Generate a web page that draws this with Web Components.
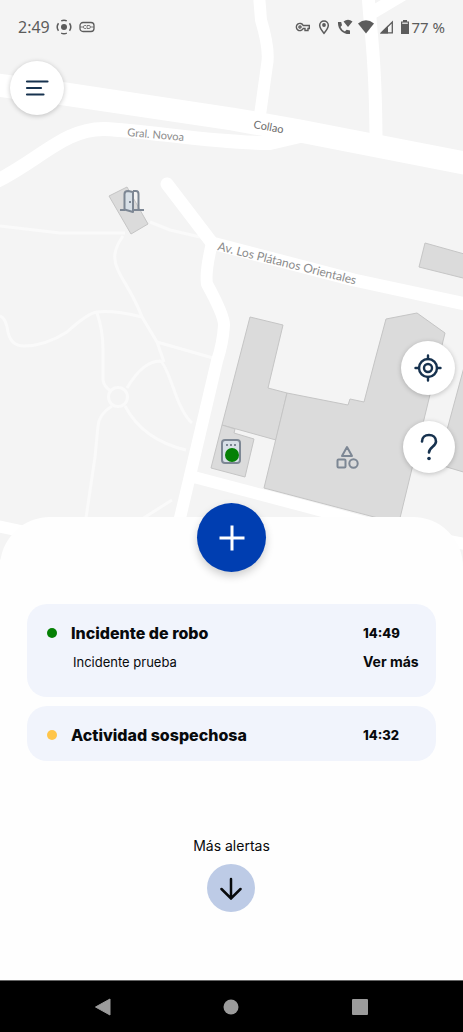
<!DOCTYPE html>
<html lang="es">
<head>
<meta charset="utf-8">
<meta name="viewport" content="width=device-width, initial-scale=1">
<title>Alertas</title>
<style>
  html, body { margin: 0; background: #fff; }
  body { font-family: Inter, "Open Sans", sans-serif; color: #080a0c; }
</style>
</head>
<body>
<alert-app></alert-app>

<script>
const define = (name, html) => {
  const template = document.createElement('template');
  template.innerHTML = html;
  customElements.define(name, class extends HTMLElement {
    constructor() {
      super();
      this.attachShadow({ mode: 'open' }).append(template.content.cloneNode(true));
    }
  });
};

define('status-bar', `
<style>
  :host { display: flex; align-items: center; justify-content: space-between; height: 54px; padding: 0 18px; color: #5c5c5c; font: 16px/20px "Noto Sans", sans-serif; }
  .group { display: flex; align-items: center; }
  .left { gap: 6px; }
  .right { gap: 5px; font-size: 15px; }
  .power { display: flex; align-items: center; gap: 1px; }
  svg { display: block; fill: none; stroke: currentColor; }
  .solid { fill: currentColor; stroke: none; }
</style>
<div class="group left">
  <time>2:49</time>
  <svg width="16" height="16" viewBox="0 0 16 16" stroke-width="1.5"><circle cx="8" cy="8" r="3" class="solid"/><path d="M5.2 1.9a6.7 6.7 0 0 1 5.6 0M5.2 14.1a6.7 6.7 0 0 0 5.6 0M2.500 4.200a6.700 6.700 0 0 0 0 7.600M13.500 4.200a6.700 6.700 0 0 1 0 7.600"/></svg>
  <svg width="18" height="12" viewBox="0 0 18 12"><rect x="2" y="1.500" width="14" height="9" rx="3" stroke-width="1.300"/><path d="M2 6h3M13 6h3M8 4.500H6.500Q5.500 4.500 5.500 6t1 1.500H8M9 4.500h2q1.500 0 1.500 1.500T11 7.500H9z" stroke-width=".8"/></svg>
</div>
<div class="group right">
  <svg width="16" height="16" viewBox="0 0 16 16" stroke-width="1.400"><path d="M8.200 6.500A3.600 3.600 0 1 0 8.200 9.500H10v2h3v-2h1.300v-3z"/><circle cx="5" cy="8" r="1.100"/></svg>
  <svg width="16" height="16" viewBox="0 0 16 16" stroke-width="1.500"><path d="M8 14.300C5.500 11.200 3.700 9 3.700 6.200a4.300 4.300 0 0 1 8.600 0C12.300 9 10.500 11.200 8 14.300z"/><circle cx="8" cy="6" r="1.900" class="solid"/></svg>
  <svg width="16" height="16" viewBox="0 0 16 16"><path class="solid" d="M1 3h3.200l.8 3.200L3.500 8q1.300 3 4.400 4.500l1.700-1.700 3.400.8V15C6 15.500 .5 10 1 3zM6.500 2.500Q11 -1 15.500 2.500L11 8z"/></svg>
  <svg width="16" height="16" viewBox="0 0 16 16"><path class="solid" d="M0 4.500Q8-2 16 4.500L8 14.500z"/></svg>
  <svg width="16" height="16" viewBox="0 0 16 16"><path class="solid" d="M1 14.500L9 6.500v8z"/><path d="M2.500 13.800L13.300 3v10.800z" stroke-width="1.300"/></svg>
  <div class="power">
    <svg width="10" height="16" viewBox="0 0 10 16"><path class="solid" d="M3 1h4v1.500h2V15H1V2.500h2z"/><path d="M2.200 4.200h5.600" stroke="#f4f4f4" stroke-width="1.200"/></svg>
    <span>77 %</span>
  </div>
</div>
`);

define('map-button', `
<style>
  :host { display: block; --size: 54px; }
  button { display: grid; place-items: center; width: var(--size); height: var(--size); padding: 0; border: 0; border-radius: 50%; background: #fff; color: #17324f; box-shadow: 0 1px 5px #00000038; }
</style>
<button type="button"><slot></slot></button>
`);

define('city-map', `
<style>
  :host { display: block; background: #f4f4f4; }
  svg { display: block; width: 100%; height: 100%; }
  .road { fill: none; stroke: #fff; stroke-linejoin: round; stroke-linecap: round; }
  .trail { fill: none; stroke: #fafafa; stroke-width: 3; stroke-linejoin: round; }
  .block { fill: #dbdbdb; stroke: #c5c5c5; stroke-width: 1; }
  .poi { fill: none; stroke: #7d8794; stroke-width: 2; stroke-linejoin: round; }
  text { font: 11px Lato, sans-serif; fill: #8c8c8c; stroke: #fff; stroke-width: 2px; paint-order: stroke; }
  .main { fill: #6b6b6b; }
  .avenue { font-size: 12px; }
</style>
<svg viewBox="0 0 463 567" preserveAspectRatio="xMidYMin slice" role="img" aria-label="Mapa">
  <g class="trail">
    <path d="M0 226L60 233L125 233M150 222L170 230L200 237M123 236C113 250 113 260 118 270C123 282 133 293 142 317L157 342L164 362M0 316Q6 318 8 332Q11 346 24 346Q45 346 67 332Q88 313 97 312Q113 310 142 317M97 313Q103 330 103 350V380Q104 387 111 391M157 342L213 358"/>
    <circle cx="118" cy="397" r="9.500"/>
    <path d="M127 388Q143 361 160 361Q164 362 173 387Q182 414 192 423M125 406Q143 440 186 450M112 406Q99 414 98 426L95 457L86 518M172 500L142 519"/>
  </g>
  <g class="road">
    <path stroke-width="12" d="M259 -5L261 20Q270 50 267 65L260 115"/>
    <path stroke-width="13" d="M368 -5L371 30Q376 80 376 145M370 14L402 -5"/>
    <path stroke-width="23" d="M-10 84L65 94L232 119L300 131L475 165"/>
    <path stroke-width="14" d="M-5 182C40 160 65 128 105 129C150 131 210 143 270 143L300 136"/>
    <path stroke-width="13" d="M167 184L212 243L354 280L470 305"/>
    <path stroke-width="12" d="M212 243Q205 272 207 284Q224 315 224 325Q223 343 217 361L180 518L176 530M190 476L300 505L400 532L470 545M-8 525L35 534Q15 538 0 575"/>
  </g>
  <g class="block">
    <path d="M109 196L127 187L148 224L131 234z"/>
    <path d="M425 243L475 257V281L419 267z"/>
    <path d="M250 317L283 325L268 388L287 393L276 440L222 425z"/>
    <path d="M222 425L235 429L234 433L254 439L245 477L211 468z"/>
    <path d="M287 393L348 405L350 399L364 402L375 360L386 319L417 313L445 333L400 518H378L264 488z"/>
    <path d="M470 345L447 430L440 465L470 474z"/>
  </g>
  <g class="poi">
    <path fill="#d8e0e7" d="M124.500 208.500V194Q124.500 191 128 191L133 192V212L124.500 209.500z"/>
    <path d="M133 191H136Q138.500 191 138.500 194V209.500M120 210H125M133 210H144M130 201V203"/>
    <rect x="222" y="440" width="18" height="23" rx="3" fill="#d8e0e7"/>
    <path stroke-dasharray="2 2" d="M226 445H237"/>
    <path d="M347 447L352 456H342z"/>
    <rect x="337.500" y="459.500" width="8" height="8" rx="1"/>
    <circle cx="353.500" cy="463.500" r="4.200"/>
  </g>
  <circle cx="232" cy="455" r="7" fill="#058005"/>
  <text transform="translate(127 136) rotate(5)">Gral. Novoa</text>
  <text class="main" transform="translate(253 128) rotate(10)">Collao</text>
  <text class="avenue" transform="translate(217 250) rotate(14)">Av. Los Plátanos Orientales</text>
</svg>
`);

define('alert-card', `
<style>
  :host { display: block; border-radius: 20px; background: #f1f4fc; padding: 15px 0 12px; }
  :host([open]) { padding-bottom: 22px; }
  article { display: grid; grid-template-columns: 10px 1fr 73px; grid-auto-rows: 28px; align-items: center; column-gap: 14px; padding-left: 20px; }
  .dot { width: 10px; height: 10px; border-radius: 50%; background: var(--level, #058005); }
  h2 { margin: 0; font-size: 16px; line-height: 28px; font-weight: 800; }
  ::slotted([slot=time]) { font-size: 13px; font-weight: 800; }
  ::slotted([slot=detail]) { grid-column: 2; font-size: 13px; padding: 2px 2px 0; }
  ::slotted([slot=link]) { font-size: 14px; font-weight: 700; color: inherit; text-decoration: none; }
</style>
<article>
  <span class="dot"></span>
  <h2><slot></slot></h2>
  <slot name="time"></slot>
  <slot name="detail"></slot>
  <slot name="link"></slot>
</article>
`);

define('alert-sheet', `
<style>
  :host { display: flex; flex-direction: column; align-items: center; background: #fefefe; border-radius: 50px 50px 0 0; }
  .add { display: grid; place-items: center; width: 69px; height: 69px; margin-top: -14px; padding: 0; border: 0; border-radius: 50%; background: #003eb1; color: #fff; box-shadow: 0 4px 8px #00000030; }
  .list { align-self: stretch; display: grid; gap: 9px; padding: 32px 27px 0; }
  .more { display: grid; justify-items: center; gap: 8px; padding: 75px 0 24px; font-size: 14px; line-height: 20px; }
  .more button { display: grid; place-items: center; width: 48px; height: 48px; padding: 0; border: 0; border-radius: 50%; background: #bdcbe6; color: #080a0c; }
  svg { display: block; fill: none; stroke: currentColor; stroke-linecap: round; }
</style>
<button class="add" type="button" aria-label="Nueva alerta"><svg width="28" height="28" viewBox="0 0 28 28" stroke-width="3" style="stroke-linecap:butt"><path d="M14 1.500v25M1.500 14h25"/></svg></button>
<div class="list"><slot></slot></div>
<div class="more">
  <span id="more">Más alertas</span>
  <button type="button" aria-labelledby="more"><svg width="24" height="24" viewBox="0 0 24 24" stroke-width="2.500"><path d="M12 3v19M2.500 13L12 22.500L21.500 13"/></svg></button>
</div>
`);

define('system-nav', `
<style>
  :host { display: block; background: #000; border-top: 1px solid #666; }
  nav { display: grid; grid-template-columns: repeat(3, 1fr); height: 51px; padding: 0 39px; }
  button { display: grid; place-items: center; padding: 0; border: 0; background: none; color: #9b9b9b; }
  svg { display: block; fill: currentColor; }
</style>
<nav>
  <button type="button" aria-label="Atrás"><svg width="18" height="18" viewBox="0 0 18 18"><path d="M1.500 9L16 1V17z" stroke="currentColor" stroke-linejoin="round"/></svg></button>
  <button type="button" aria-label="Inicio"><svg width="18" height="18" viewBox="0 0 18 18"><circle cx="9" cy="9" r="7.500"/></svg></button>
  <button type="button" aria-label="Recientes"><svg width="18" height="18" viewBox="0 0 18 18"><rect x="1" y="1" width="16" height="16" rx="1"/></svg></button>
</nav>
`);

define('alert-app', `
<style>
  :host { display: flex; flex-direction: column; min-height: 100vh; }
  .stage { display: grid; grid-template-rows: 567px; }
  .stage > * { grid-area: 1 / 1; }
  .overlay { position: relative; display: flex; flex-direction: column; }
  .menu { padding: 7px 10px; }
  .tools { display: flex; flex-direction: column; align-items: flex-end; gap: 26px; margin-top: auto; padding: 0 8px 94px; }
  .help { --size: 52px; }
  alert-sheet { position: relative; flex: 1; margin-top: -50px; }
  svg { display: block; fill: none; stroke: currentColor; stroke-linecap: round; }
</style>
<main class="stage">
  <city-map></city-map>
  <div class="overlay">
    <status-bar></status-bar>
    <div class="menu">
      <map-button><svg width="24" height="18" viewBox="0 0 24 18" stroke-width="2.200" role="img" aria-label="Menú"><path d="M2 2.500H22.500M2 9H16M2 15.500H18.500"/></svg></map-button>
    </div>
    <div class="tools">
      <map-button><svg width="28" height="28" viewBox="0 0 28 28" stroke-width="2.400" role="img" aria-label="Mi ubicación"><circle cx="14" cy="14" r="9"/><circle cx="14" cy="14" r="4"/><path d="M14 1.500V5M14 23v3.500M1.500 14H5M23 14h3.500"/></svg></map-button>
      <map-button class="help"><svg width="20" height="28" viewBox="0 0 20 28" stroke-width="2.600" role="img" aria-label="Ayuda"><path d="M3 8.500C3 4.500 6 2 10 2s7 2.500 7 6.500c0 5-7 5.500-7 11"/><circle cx="10" cy="25.500" r="1.800" fill="currentColor" stroke="none"/></svg></map-button>
    </div>
  </div>
</main>
<alert-sheet>
  <alert-card open>Incidente de robo
    <time slot="time">14:49</time>
    <span slot="detail">Incidente prueba</span>
    <a slot="link" href="#detalle">Ver más</a>
  </alert-card>
  <alert-card style="--level:#ffc54a">Actividad sospechosa
    <time slot="time">14:32</time>
  </alert-card>
</alert-sheet>
<system-nav></system-nav>
`);
</script>
</body>
</html>
